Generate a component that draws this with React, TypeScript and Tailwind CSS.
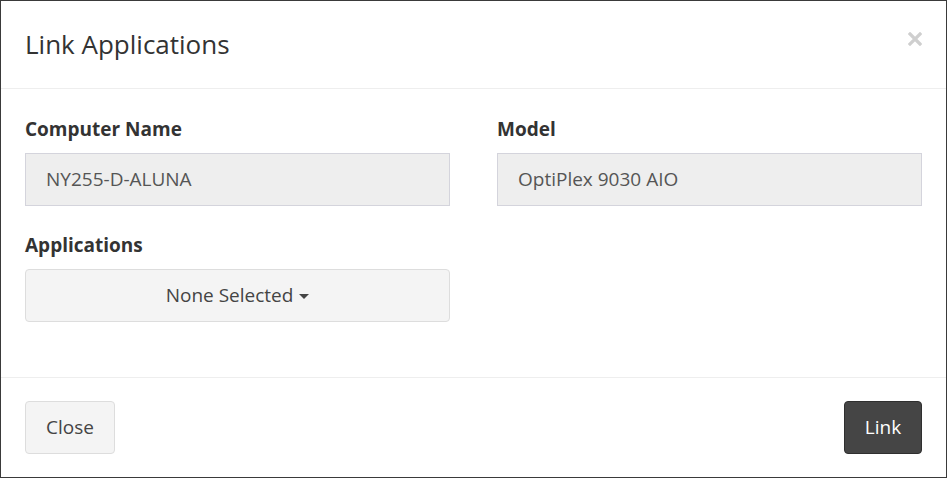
import type { ReactNode } from "react";

const font = { fontFamily: "'Open Sans', Lato, sans-serif" };

function Field({ label, children }: { label: string; children: ReactNode }) {
  return (
    <div className="flex flex-col">
      <label className="mb-3 text-[19px] leading-6 font-bold text-[#333]">{label}</label>
      {children}
    </div>
  );
}

function ReadOnlyInput({ value }: { value: string }) {
  return (
    <div className="flex h-[53px] items-center border border-[#d4d4dc] bg-[#eeeeee] px-5 text-[19px] text-[#555]">
      {value}
    </div>
  );
}

export default function App() {
  return (
    <div
      className="flex h-[478px] w-[947px] flex-col border border-[#3a3a3a] bg-white"
      style={font}
    >
      {/* header */}
      <div className="flex h-[88px] shrink-0 items-center justify-between border-b border-[#eeeeee] pr-6 pl-6">
        <h2 className="text-[26px] font-normal text-[#333]">Link Applications</h2>
        <button type="button" aria-label="Close" className="-mt-[12px]">
          <svg width="14" height="14" viewBox="0 0 14 14">
            <path d="M2 2 L12 12 M12 2 L2 12" stroke="#cfcfcf" strokeWidth="3.2" strokeLinecap="square" />
          </svg>
        </button>
      </div>

      {/* body */}
      <div className="flex flex-1 flex-col px-6 pt-[28px]">
        <div className="grid grid-cols-2 gap-[47px]">
          <Field label="Computer Name">
            <ReadOnlyInput value="NY255-D-ALUNA" />
          </Field>
          <Field label="Model">
            <ReadOnlyInput value="OptiPlex 9030 AIO" />
          </Field>
        </div>
        <div className="mt-[27px] grid grid-cols-2 gap-[47px]">
          <Field label="Applications">
            <button
              type="button"
              className="flex h-[53px] items-center justify-center gap-1.5 rounded border border-[#dddddd] bg-[#f4f4f4] text-[19px] text-[#444]"
            >
              None Selected
              <span className="mt-0.5 h-0 w-0 border-x-[5px] border-t-[5px] border-x-transparent border-t-[#444]" />
            </button>
          </Field>
        </div>
      </div>

      {/* footer */}
      <div className="flex h-[100px] shrink-0 items-center justify-between border-t border-[#eeeeee] px-6">
        <button
          type="button"
          className="h-[53px] w-[90px] rounded border border-[#dddddd] bg-[#f4f4f4] text-[19px] text-[#444]"
        >
          Close
        </button>
        <button
          type="button"
          className="h-[53px] w-[78px] rounded border border-[#2f2f2f] bg-[#454545] text-[19px] text-white"
        >
          Link
        </button>
      </div>
    </div>
  );
}
